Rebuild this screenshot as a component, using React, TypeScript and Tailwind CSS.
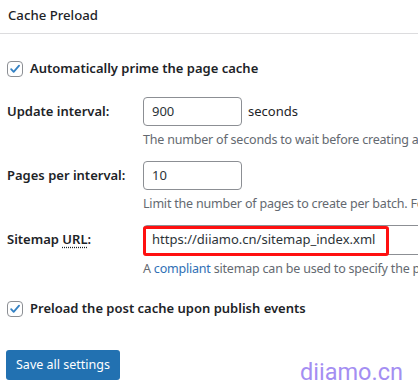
import React from 'react';

const font = { fontFamily: '"Segoe UI", "Noto Sans", sans-serif' };

const CheckBox = () => (
  <span className="flex h-4 w-4 shrink-0 items-center justify-center rounded-[4px] border border-[#8c8f94] bg-white">
    <svg viewBox="0 0 20 20" className="h-[18px] w-[18px]">
      <path d="M4.5 10.2l3.6 3.8L15.8 5.2" fill="none" stroke="#3582c4" strokeWidth="2.6" strokeLinecap="round" strokeLinejoin="round" />
    </svg>
  </span>
);

const Field = ({ label, children, help }: { label: React.ReactNode; children: React.ReactNode; help: React.ReactNode }) => (
  <div className="grid grid-cols-[136px_1fr] items-start">
    <div className="flex h-[30px] items-center text-[13px] font-semibold text-[#1d2327]">{label}</div>
    <div className="min-w-0">
      {children}
      <p className="h-[28px] whitespace-nowrap text-[12.5px] leading-[28px] tracking-[-0.2px] text-[#646970]">{help}</p>
    </div>
  </div>
);

export default function App() {
  return (
    <div className="h-[392px] w-[418px] overflow-hidden bg-white text-[13px] text-[#1d2327]" style={font}>
      <div className="border-b border-[#dcdcde] px-2 pb-[8px] pt-[5px]">
        <h2 className="text-[13.2px] font-medium leading-[20px]">Cache Preload</h2>
      </div>

      <div className="pl-[7px] pt-[26px]">
        <label className="flex h-[18px] items-center gap-[7px] text-[13px] font-semibold">
          <CheckBox />
          Automatically prime the page cache
        </label>

        <div className="mt-[19px] flex flex-col gap-[7px]">
          <Field
            label="Update interval:"
            help="The number of seconds to wait before creating a new batch of cached pages."
          >
            <div className="flex items-center gap-[6px]">
              <div className="flex h-[29px] w-[99px] items-center rounded-[4px] border border-[#8c8f94] px-[8px] text-[#2c3338]">900</div>
              <span>seconds</span>
            </div>
          </Field>

          <Field
            label="Pages per interval:"
            help="Limit the number of pages to create per batch. Fewer pages will be less resource intensive."
          >
            <div className="flex h-[29px] w-[99px] items-center rounded-[4px] border border-[#8c8f94] px-[8px] text-[#2c3338]">10</div>
          </Field>

          <Field
            label={
              <span>
                Sitemap <abbr className="no-underline [text-decoration:underline_dotted] [text-underline-offset:3px]">URL</abbr>:
              </span>
            }
            help={
              <>
                A <span className="text-[#2f6fb5]">compliant</span> sitemap can be used to specify the pages to preload.
              </>
            }
          >
            <div className="relative h-[30px] w-[400px]">
              <div className="flex h-[30px] items-center rounded-[4px] border border-[#8c8f94] px-[8px] text-[#2c3338]">
                https://diiamo.cn/sitemap_index.xml
              </div>
              <div className="absolute left-0 top-[1px] h-[30px] w-[246px] rounded-[3px] border-[3px] border-[#ff1010]" />
            </div>
          </Field>
        </div>

        <label className="mt-[17px] flex h-[18px] items-center gap-[7px] text-[13px] font-semibold">
          <CheckBox />
          Preload the post cache upon publish events
        </label>

        <div className="mt-[32px] flex items-start justify-between pr-[15px]">
          <button className="-ml-px h-[30px] rounded-[3px] bg-[#2271b1] px-[10px] text-[12.5px] text-white">Save all settings</button>
          <span className="mt-[11px] text-[23.5px] leading-none text-[#a48ef2]" style={{ fontFamily: 'Roboto, sans-serif' }}>diiamo.cn</span>
        </div>
      </div>
    </div>
  );
}
